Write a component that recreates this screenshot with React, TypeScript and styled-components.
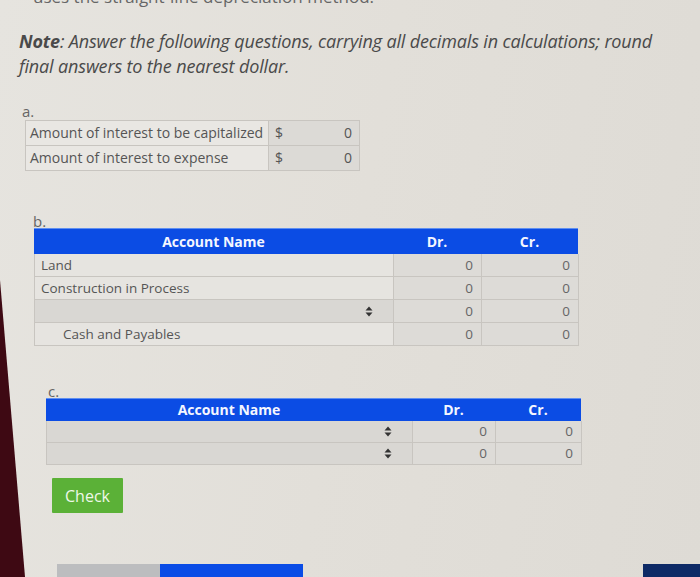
import React from "react";
import styled, { createGlobalStyle } from "styled-components";

const GlobalStyle = createGlobalStyle`
  html, body {
    margin: 0;
    padding: 0;
    height: 577px;
    overflow: hidden;
    background: #e3e0db;
    font-family: "Open Sans", "Noto Sans", sans-serif;
    color: #555;
  }
  body::before {
    content: "";
    position: fixed;
    z-index: 10;
    left: 0;
    top: 0;
    width: 30px;
    height: 577px;
    background: #3e0913;
    clip-path: polygon(0 280px, 25px 577px, 0 577px);
    pointer-events: none;
  }
`;

const Page = styled.div`
  position: relative;
  height: 577px;
  display: flex;
  flex-direction: column;
  background: linear-gradient(100deg, #e6e4df 0%, #e2dfd9 50%, #dedbd5 100%);
`;

const CutLine = styled.div`
  margin: -13px 0 0 33px;
  font-size: 17px;
  line-height: 20px;
  color: #666;
  white-space: nowrap;
`;

const Note = styled.p`
  margin: 22px 0 0 19px;
  width: 650px;
  font-size: 18px;
  line-height: 25px;
  font-style: italic;
  color: #4a4a4a;
  letter-spacing: -0.15px;
  b {
    font-weight: 700;
  }
`;

const PartLabel = styled.div<{ $left: number; $top: number }>`
  margin: ${(p) => p.$top}px 0 0 ${(p) => p.$left}px;
  font-size: 15px;
  line-height: 18px;
  color: #666;
`;

const SmallTable = styled.div`
  margin: 0 0 0 25px;
  width: 333px;
  display: grid;
  grid-template-columns: 243px 90px;
  border: 1px solid #c8c5c0;
  font-size: 14px;
  color: #555;
`;

const SmallLabel = styled.div<{ $last?: boolean }>`
  height: 24px;
  line-height: 24px;
  padding-left: 4px;
  background: #e9e7e3;
  border-right: 1px solid #c8c5c0;
  border-bottom: ${(p) => (p.$last ? "none" : "1px solid #c8c5c0")};
  white-space: nowrap;
`;

const SmallValue = styled.div<{ $last?: boolean }>`
  height: 24px;
  line-height: 24px;
  display: flex;
  justify-content: space-between;
  padding: 0 7px 0 6px;
  background: #dcdad6;
  border-bottom: ${(p) => (p.$last ? "none" : "1px solid #c8c5c0")};
`;

const Journal = styled.div<{ $left: number; $cols: string; $top: number }>`
  margin: ${(p) => p.$top}px 0 0 ${(p) => p.$left}px;
  display: grid;
  grid-template-columns: ${(p) => p.$cols};
  width: fit-content;
  font-size: 13.5px;
`;

const HeadCell = styled.div<{ $h: number }>`
  height: ${(p) => p.$h}px;
  line-height: ${(p) => p.$h}px;
  background: #0b4ce4;
  border-top: 1px solid #5f8ff0;
  color: #f4f6ff;
  font-weight: 700;
  font-size: 14px;
  text-align: center;
`;

const AccountCell = styled.div<{ $h: number; $indent?: boolean; $select?: boolean }>`
  height: ${(p) => p.$h}px;
  line-height: ${(p) => p.$h}px;
  padding-left: ${(p) => (p.$indent ? 28 : 6)}px;
  padding-right: 20px;
  display: flex;
  align-items: center;
  justify-content: ${(p) => (p.$select ? "flex-end" : "flex-start")};
  background: ${(p) => (p.$select ? "#d9d7d3" : "#e6e4e0")};
  border-left: 1px solid #c8c5c0;
  border-bottom: 1px solid #c8c5c0;
  color: #555;
  white-space: nowrap;
`;

const AmountCell = styled.div<{ $h: number }>`
  height: ${(p) => p.$h}px;
  line-height: ${(p) => p.$h}px;
  text-align: right;
  padding-right: 8px;
  background: #dddbd7;
  border-left: 1px solid #c8c5c0;
  border-right: 1px solid #c8c5c0;
  border-bottom: 1px solid #c8c5c0;
  margin-right: -1px;
  color: #666;
`;

const CheckButton = styled.button`
  margin: 13px 0 0 52px;
  width: 71px;
  height: 35px;
  border: none;
  border-radius: 1px;
  background: #5bb137;
  color: #eef8e8;
  font-family: "Open Sans", sans-serif;
  font-size: 16px;
  padding: 0;
  align-self: flex-start;
`;

const BottomBars = styled.div`
  margin-top: auto;
  height: 13px;
  display: flex;
`;

const Bar = styled.div<{ $w: number; $c: string; $ml?: number }>`
  width: ${(p) => p.$w}px;
  margin-left: ${(p) => p.$ml ?? 0}px;
  background: ${(p) => p.$c};
`;

const Arrows = () => (
  <svg width="8" height="11" viewBox="0 0 8 11">
    <path d="M4 0.5 L7.5 4.5 H0.5 Z M4 10.5 L7.5 6.5 H0.5 Z" fill="#333" />
  </svg>
);

type Row = { name: string; indent?: boolean; select?: boolean };

const JournalTable = ({
  left,
  top,
  cols,
  headH,
  rowH,
  rows,
}: {
  left: number;
  top: number;
  cols: string;
  headH: number;
  rowH: number;
  rows: Row[];
}) => (
  <Journal $left={left} $top={top} $cols={cols}>
    <HeadCell $h={headH}>Account Name</HeadCell>
    <HeadCell $h={headH}>Dr.</HeadCell>
    <HeadCell $h={headH}>Cr.</HeadCell>
    {rows.map((r, i) => (
      <React.Fragment key={i}>
        <AccountCell $h={rowH} $indent={r.indent} $select={r.select}>
          {r.select ? <Arrows /> : r.name}
        </AccountCell>
        <AmountCell $h={rowH}>0</AmountCell>
        <AmountCell $h={rowH}>0</AmountCell>
      </React.Fragment>
    ))}
  </Journal>
);

export default function App() {
  return (
    <>
      <GlobalStyle />
      <Page>
        <CutLine>uses the straight-line depreciation method.</CutLine>
        <Note>
          <b>Note</b>: Answer the following questions, carrying all decimals in calculations; round
          final answers to the nearest dollar.
        </Note>
        <PartLabel $left={22} $top={23}>a.</PartLabel>
        <SmallTable>
          <SmallLabel>Amount of interest to be capitalized</SmallLabel>
          <SmallValue>
            <span>$</span>
            <span>0</span>
          </SmallValue>
          <SmallLabel $last>Amount of interest to expense</SmallLabel>
          <SmallValue $last>
            <span>$</span>
            <span>0</span>
          </SmallValue>
        </SmallTable>
        <PartLabel $left={33} $top={41}>b.</PartLabel>
        <JournalTable
          left={34}
          top={-2}
          cols="359px 88px 97px"
          headH={25}
          rowH={22}
          rows={[
            { name: "Land" },
            { name: "Construction in Process" },
            { name: "", select: true },
            { name: "Cash and Payables", indent: true },
          ]}
        />
        <PartLabel $left={48} $top={36}>c.</PartLabel>
        <JournalTable
          left={46}
          top={-2}
          cols="366px 83px 86px"
          headH={22}
          rowH={21}
          rows={[
            { name: "", select: true },
            { name: "", select: true },
          ]}
        />
        <CheckButton>Check</CheckButton>
        <BottomBars>
          <Bar $w={103} $c="#bcbdbf" $ml={57} />
          <Bar $w={143} $c="#0a4ce6" />
          <Bar $w={57} $c="#0e2a66" $ml={340} />
        </BottomBars>
      </Page>
    </>
  );
}
